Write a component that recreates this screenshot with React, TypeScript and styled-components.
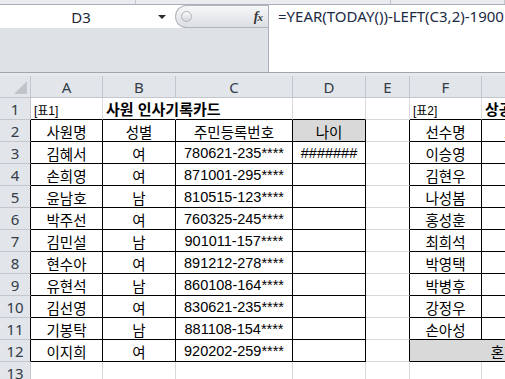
import React from 'react';
import styled, { createGlobalStyle } from 'styled-components';

const GlobalStyle = createGlobalStyle`
  html, body {
    margin: 0;
    padding: 0;
    background: #fff;
    overflow: hidden;
  }
`;

const GRID = '#d9d9d9';
const HEAD_LINE = '#c3c7cd';
const INK = '#000';

const Window = styled.div`
  width: 505px;
  height: 379px;
  overflow: hidden;
  display: flex;
  flex-direction: column;
  background: #fff;
  font-family: 'Liberation Sans', 'Noto Sans CJK KR', sans-serif;
`;

// 리본 아래쪽 가장자리
const RibbonEdge = styled.div`
  display: flex;
  height: 4px;
  flex-shrink: 0;
  background: #e9ebee;
  border-bottom: 1px solid #a9b0b9;
`;

const RibbonGroup = styled.div<{ $w?: number }>`
  width: ${(p) => (p.$w ? `${p.$w}px` : 'auto')};
  flex: ${(p) => (p.$w ? 'none' : 1)};
  border-right: 1px solid #c2c7ce;
`;

const FormulaBar = styled.div`
  display: flex;
  height: 67px;
  flex-shrink: 0;
  border-bottom: 1px solid #9fa6ae;
`;

const LeftPane = styled.div`
  width: 268px;
  display: flex;
  flex-direction: column;
  background: #dee1e6;
`;

const NameRow = styled.div`
  display: flex;
  height: 23px;
  background: #fff;
`;

const NameBox = styled.div`
  width: 175px;
  display: flex;
  align-items: center;
  font-family: 'Noto Sans', sans-serif;
  font-size: 15px;
  color: #1d2633;
`;

const NameText = styled.span`
  flex: 1;
  text-align: center;
  padding-left: 4px;
`;

const Caret = styled.span`
  width: 0;
  height: 0;
  margin-right: 9px;
  border-left: 4px solid transparent;
  border-right: 4px solid transparent;
  border-top: 4px solid #2b2b2b;
`;

const Splitter = styled.div`
  flex: 1;
  display: flex;
  align-items: center;
  justify-content: space-between;
  padding: 0 6px 0 5px;
  border: 1px solid #b0b6be;
  border-right: none;
  border-radius: 12px 0 0 12px;
  background: linear-gradient(#f6f7f8, #dcdfe3);
`;

const Knob = styled.span`
  width: 9px;
  height: 9px;
  border-radius: 50%;
  border: 1px solid #aeb4bc;
  background: linear-gradient(#fafafa, #d2d6db);
`;

const Fx = styled.span`
  font-family: 'Liberation Serif', serif;
  font-style: italic;
  font-weight: bold;
  font-size: 14px;
  color: #3a3a3a;
  letter-spacing: -1px;

  small {
    font-size: 11px;
  }
`;

const FormulaInput = styled.div`
  flex: 1;
  background: #fff;
  border-left: 1px solid #a9b0b9;
  padding: 0 0 0 9px;
  line-height: 23px;
  font-family: 'Noto Sans', sans-serif;
  font-size: 15px;
  color: #1c2a44;
  white-space: nowrap;
  overflow: hidden;
`;

const SheetGap = styled.div`
  height: 3px;
  flex-shrink: 0;
  background: #e7e9ec;
`;

const Sheet = styled.div`
  display: grid;
  grid-template-columns: 31px 72px 73px 117px 73px 44px 72px 72px 72px;
  grid-auto-rows: 22px;
  width: max-content;
`;

const HeadCell = styled.div<{ $right?: string }>`
  box-sizing: border-box;
  display: flex;
  align-items: center;
  justify-content: center;
  background: #e2e5e9;
  border-right: 1px solid ${(p) => p.$right ?? HEAD_LINE};
  border-bottom: 1px solid ${HEAD_LINE};
  font-family: 'Noto Sans', sans-serif;
  font-size: 15px;
  color: #333c48;
`;

const Corner = styled(HeadCell)`
  position: relative;

  &::after {
    content: '';
    position: absolute;
    right: 3px;
    bottom: 3px;
    border-left: 13px solid transparent;
    border-bottom: 13px solid #c1c5ca;
  }
`;

const Cell = styled.div<{
  $right: string;
  $bottom: string;
  $fill?: string;
  $align?: 'left' | 'center';
  $size?: number;
  $bold?: boolean;
  $low?: boolean;
  $span?: number;
}>`
  box-sizing: border-box;
  display: flex;
  align-items: ${(p) => (p.$low ? 'flex-end' : 'center')};
  justify-content: ${(p) => (p.$align === 'left' ? 'flex-start' : 'center')};
  grid-column: span ${(p) => p.$span ?? 1};
  padding: ${(p) => (p.$align === 'left' ? '0 0 1px 3px' : '1px 0 0 0')};
  background: ${(p) => p.$fill ?? 'transparent'};
  border-right: 1px solid ${(p) => p.$right};
  border-bottom: 1px solid ${(p) => p.$bottom};
  font-size: ${(p) => p.$size ?? 14.5}px;
  font-weight: ${(p) => (p.$bold ? 700 : 400)};
  color: #000;
  white-space: nowrap;
  overflow: visible;
  position: relative;
  z-index: ${(p) => (p.$align === 'left' ? 1 : 0)};
`;

type CellDef = {
  text: string;
  align?: 'left' | 'center';
  size?: number;
  bold?: boolean;
  fill?: string;
  span?: number;
  spill?: boolean;
  low?: boolean;
};

const COLS = ['A', 'B', 'C', 'D', 'E', 'F', 'G', 'H'];

const people: [string, string, string][] = [
  ['김혜서', '여', '780621-235****'],
  ['손희영', '여', '871001-295****'],
  ['윤남호', '남', '810515-123****'],
  ['박주선', '여', '760325-245****'],
  ['김민설', '남', '901011-157****'],
  ['현수아', '여', '891212-278****'],
  ['유현석', '남', '860108-164****'],
  ['김선영', '여', '830621-235****'],
  ['기봉탁', '남', '881108-154****'],
  ['이지희', '여', '920202-259****'],
];

const players = ['이승영', '김현우', '나성봄', '홍성훈', '최희석', '박영택', '박병후', '강정우', '손아성'];

const buildCells = () => {
  const cells: Record<string, CellDef> = {};
  const put = (r: number, c: number, def: CellDef) => {
    cells[`${r}-${c}`] = def;
  };

  put(1, 1, { text: '[표1]', align: 'left', size: 12, low: true });
  put(1, 2, { text: '사원 인사기록카드', align: 'left', size: 15, bold: true, spill: true });
  put(1, 6, { text: '[표2]', align: 'left', size: 12, low: true });
  put(1, 7, { text: '상공배드민턴 대회 결과', align: 'left', size: 15, bold: true, spill: true });

  put(2, 1, { text: '사원명' });
  put(2, 2, { text: '성별' });
  put(2, 3, { text: '주민등록번호' });
  put(2, 4, { text: '나이', fill: '#d9d9d9' });
  put(2, 6, { text: '선수명' });
  put(2, 7, { text: '소속' });

  people.forEach(([name, sex, id], i) => {
    put(i + 3, 1, { text: name });
    put(i + 3, 2, { text: sex });
    put(i + 3, 3, { text: id });
  });
  put(3, 4, { text: '#######' });

  players.forEach((name, i) => put(i + 3, 6, { text: name }));
  put(12, 6, { text: '혼합평균', fill: '#d9d9d9', span: 3 });

  return cells;
};

const boxed = (r: number, c: number) => {
  if (r >= 2 && r <= 12 && c >= 1 && c <= 4) return true;
  if (r >= 2 && r <= 11 && (c === 6 || c === 7)) return true;
  if (r === 12 && c >= 6 && c <= 8) return true;
  return false;
};

const App: React.FC = () => {
  const cells = buildCells();
  const rows = Array.from({ length: 13 }, (_, i) => i + 1);

  return (
    <Window>
      <GlobalStyle />
      <RibbonEdge>
        <RibbonGroup $w={135} />
        <RibbonGroup $w={254} />
        <RibbonGroup />
      </RibbonEdge>

      <FormulaBar>
        <LeftPane>
          <NameRow>
            <NameBox>
              <NameText>D3</NameText>
              <Caret />
            </NameBox>
            <Splitter>
              <Knob />
              <Fx>
                f<small>x</small>
              </Fx>
            </Splitter>
          </NameRow>
        </LeftPane>
        <FormulaInput>=YEAR(TODAY())-LEFT(C3,2)-1900</FormulaInput>
      </FormulaBar>
      <SheetGap />

      <Sheet>
        <Corner />
        {COLS.map((col) => (
          <HeadCell key={col}>{col}</HeadCell>
        ))}

        {rows.map((r) => {
          const out: React.ReactNode[] = [
            <HeadCell key={`h${r}`} $right={boxed(r, 1) ? INK : HEAD_LINE}>
              {r}
            </HeadCell>,
          ];
          let c = 1;
          while (c <= COLS.length) {
            const def = cells[`${r}-${c}`];
            const span = def?.span ?? 1;
            const last = c + span - 1;
            let bottomInk = false;
            for (let k = c; k <= last; k++) {
              if (boxed(r, k) || boxed(r + 1, k)) bottomInk = true;
            }
            const rightInk = boxed(r, last) || boxed(r, last + 1);
            const right = rightInk ? INK : def?.spill ? 'transparent' : GRID;
            out.push(
              <Cell
                key={`${r}-${c}`}
                $right={right}
                $bottom={bottomInk ? INK : GRID}
                $fill={def?.fill}
                $align={def?.align}
                $size={def?.size}
                $bold={def?.bold}
                $low={def?.low}
                $span={span}
              >
                {def?.text}
              </Cell>
            );
            c = last + 1;
          }
          return out;
        })}
      </Sheet>
    </Window>
  );
};

export default App;
